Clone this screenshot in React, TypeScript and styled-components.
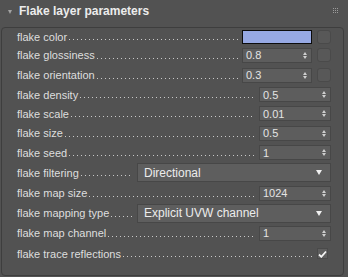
import React from 'react'
import styled, { createGlobalStyle } from 'styled-components'

const Global = createGlobalStyle`
    html, body {
        margin: 0;
        padding: 0;
        background: #525252;
    }
    body {
        font-family: 'Liberation Sans', Arial, sans-serif;
    }
`

const Rollout = styled.div`
    width: 348px;
    height: 277px;
    background: #525252;
    display: flex;
    flex-direction: column;
    overflow: hidden;
`

const Header = styled.div`
    height: 27px;
    display: flex;
    align-items: center;
    padding: 0 10px 0 8px;
    box-sizing: border-box;
`

const Arrow = styled.span`
    width: 0;
    height: 0;
    border-left: 2.5px solid transparent;
    border-right: 2.5px solid transparent;
    border-top: 4px solid #a3a3a3;
    margin: -3px 7px 0 0;
`

const Title = styled.span`
    flex: 1;
    font-weight: bold;
    font-size: 12px;
    color: #ececec;
    margin-top: -5px;
`

const Grip = styled.div`
    display: grid;
    grid-template-columns: repeat(3, 1px);
    grid-auto-rows: 1px;
    gap: 1px;
    margin-top: -7px;

    span {
        background: #9c9c9c;
    }
`

const Frame = styled.div`
    margin: 0 4px 0 1px;
    height: 247px;
    border: 1px solid #3e3e3e;
    border-radius: 4px;
    padding: 0 12px 0 15px;
    display: flex;
    flex-direction: column;
`

const Row = styled.div<{ $h: number }>`
    height: ${({ $h }) => $h}px;
    display: flex;
    align-items: center;
`

const Label = styled.span`
    font-size: 11px;
    color: #dedede;
    white-space: nowrap;
`

const Leader = styled.span`
    flex: 1;
    height: 1px;
    margin: 6px 4px 0 2px;
    background-image: linear-gradient(to right, #c8c8c8 1px, transparent 1px);
    background-size: 4px 1px;
    background-repeat: repeat-x;
`

const Swatch = styled.div`
    width: 70px;
    height: 14px;
    box-sizing: border-box;
    border: 1px solid #0c0c0c;
    background: #97a9e4;
`

const SideButton = styled.div`
    width: 14px;
    height: 14px;
    box-sizing: border-box;
    margin-left: 5px;
    border: 1px solid #4a4a4a;
    border-radius: 3px;
    background: #585858;
`

const SpinnerBox = styled.div<{ $w: number }>`
    width: ${({ $w }) => $w}px;
    height: 15px;
    box-sizing: border-box;
    border: 1px solid #474747;
    background: #5d5d5d;
    display: flex;
    align-items: center;
    padding: 0 4px 0 3px;
    font-size: 11px;
    color: #e4e4e4;
`

const SpinValue = styled.span`
    flex: 1;
`

const SpinArrows = styled.span`
    display: flex;
    flex-direction: column;
    gap: 1px;

    &::before,
    &::after {
        content: '';
        width: 0;
        height: 0;
        border-left: 2.5px solid transparent;
        border-right: 2.5px solid transparent;
    }
    &::before {
        border-bottom: 3px solid #cfcfcf;
    }
    &::after {
        border-top: 3px solid #cfcfcf;
    }
`

const Dropdown = styled.div`
    width: 194px;
    flex: none;
    height: 19px;
    box-sizing: border-box;
    border: 1px solid #474747;
    background: #5e5e5e;
    display: flex;
    align-items: center;
    padding: 0 8px 0 6px;
    font-size: 12px;
    color: #ececec;
    white-space: nowrap;
`

const DropText = styled.span`
    flex: 1;
`

const DropArrow = styled.span`
    width: 0;
    height: 0;
    border-left: 3.5px solid transparent;
    border-right: 3.5px solid transparent;
    border-top: 5px solid #f0f0f0;
`

const Check = styled.div`
    width: 11px;
    height: 11px;
    margin-right: 3px;
    background: #5e5e5e;
    border: 1px solid #4a4a4a;
    box-sizing: border-box;
    display: flex;
    align-items: center;
    justify-content: center;
`

const Spinner = ({ value, w }: { value: string; w: number }) => (
    <SpinnerBox $w={w}>
        <SpinValue>{value}</SpinValue>
        <SpinArrows />
    </SpinnerBox>
)

const spinners: [string, string, number][] = [
    ['flake density', '0.5', 19],
    ['flake scale', '0.01', 19],
    ['flake size', '0.5', 20],
    ['flake seed', '1', 19],
]

export default function App() {
    return (
        <>
            <Global />
            <Rollout>
                <Header>
                    <Arrow />
                    <Title>Flake layer parameters</Title>
                    <Grip>
                        {Array.from({ length: 9 }).map((_, i) => (
                            <span key={i} />
                        ))}
                    </Grip>
                </Header>
                <Frame>
                    <Row $h={17}>
                        <Label>flake color</Label>
                        <Leader />
                        <Swatch />
                        <SideButton />
                    </Row>
                    <Row $h={20}>
                        <Label>flake glossiness</Label>
                        <Leader />
                        <Spinner value="0.8" w={70} />
                        <SideButton />
                    </Row>
                    <Row $h={20}>
                        <Label>flake orientation</Label>
                        <Leader />
                        <Spinner value="0.3" w={70} />
                        <SideButton />
                    </Row>
                    {spinners.map(([label, value, h]) => (
                        <Row $h={h} key={label}>
                            <Label>{label}</Label>
                            <Leader />
                            <Spinner value={value} w={72} />
                        </Row>
                    ))}
                    <Row $h={21}>
                        <Label>flake filtering</Label>
                        <Leader />
                        <Dropdown>
                            <DropText>Directional</DropText>
                            <DropArrow />
                        </Dropdown>
                    </Row>
                    <Row $h={20}>
                        <Label>flake map size</Label>
                        <Leader />
                        <Spinner value="1024" w={72} />
                    </Row>
                    <Row $h={20}>
                        <Label>flake mapping type</Label>
                        <Leader />
                        <Dropdown>
                            <DropText>Explicit UVW channel</DropText>
                            <DropArrow />
                        </Dropdown>
                    </Row>
                    <Row $h={20}>
                        <Label>flake map channel</Label>
                        <Leader />
                        <Spinner value="1" w={72} />
                    </Row>
                    <Row $h={21}>
                        <Label>flake trace reflections</Label>
                        <Leader />
                        <Check>
                            <svg width="9" height="8" viewBox="0 0 9 8">
                                <path
                                    d="M1 4.5 L3.3 6.8 L8 1.5"
                                    stroke="#f4f4f4"
                                    strokeWidth="1.8"
                                    fill="none"
                                />
                            </svg>
                        </Check>
                    </Row>
                </Frame>
            </Rollout>
        </>
    )
}
